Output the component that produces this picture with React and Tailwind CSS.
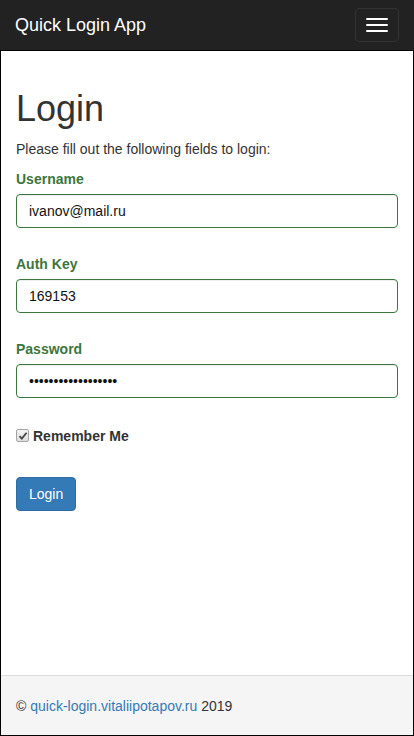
import React from 'react';

const fields = [
  { label: 'Username', type: 'text', value: 'ivanov@mail.ru' },
  { label: 'Auth Key', type: 'text', value: '169153' },
  { label: 'Password', type: 'password', value: 'qwertyuiopasdfghjk' },
];

const App = () => {
  return (
    <div className="min-h-screen flex flex-col bg-white text-[#333] text-[14px] leading-5" style={{ fontFamily: '"Liberation Sans", Arial, sans-serif' }}>
      {/* Navbar */}
      <nav className="h-[50px] bg-[#222] flex items-center justify-between shrink-0">
        <span className="pl-[15px] text-[18px] leading-5 text-white">Quick Login App</span>
        <button className="mr-[15px] w-[44px] h-[34px] border border-[#333] rounded-[4px] flex flex-col items-center justify-center gap-[4px]">
          <span className="block w-[22px] h-[2px] bg-white rounded-[1px]" />
          <span className="block w-[22px] h-[2px] bg-white rounded-[1px]" />
          <span className="block w-[22px] h-[2px] bg-white rounded-[1px]" />
        </button>
      </nav>

      <div className="flex-1 flex flex-col border border-black">
        <main className="flex-1 px-[15px] pt-[18px]">
          <h1 className="mt-[20px] mb-[10px] text-[36px] leading-[1.1] font-normal">Login</h1>
          <p className="mb-[10px]">Please fill out the following fields to login:</p>

          {fields.map((f, i) => (
            <div key={f.label} className={i === 0 ? '' : 'mt-[26px]'}>
              <label className="block mb-[5px] font-bold text-[#3c763d]">{f.label}</label>
              <input
                type={f.type}
                value={f.value}
                readOnly
                className="block w-full h-[34px] px-[12px] py-[6px] border border-[#3c763d] rounded-[4px] text-[14px] text-[#111] bg-white shadow-[inset_0_1px_1px_rgba(0,0,0,0.075)] outline-none"
              />
            </div>
          ))}

          {/* Remember me */}
          <div className="mt-[28px] flex items-center h-5">
            <span className="w-[13px] h-[13px] border border-[#a5a5a5] rounded-[2px] bg-gradient-to-b from-[#f4f4f4] to-[#dedede] flex items-center justify-center">
              <svg width="10" height="10" viewBox="0 0 10 10">
                <path d="M1.5 5.2 L3.8 7.6 L8.6 1.8" fill="none" stroke="#444" strokeWidth="1.8" />
              </svg>
            </span>
            <span className="ml-[4px] font-bold">Remember Me</span>
          </div>

          <button className="mt-[31px] h-[34px] px-[12px] bg-[#337ab7] border border-[#2e6da4] rounded-[4px] text-white text-[14px]">
            Login
          </button>
        </main>

        <footer className="h-[60px] border-t border-[#ddd] bg-[#f5f5f5] px-[15px] pt-[20px]">
          <p>
            © <a className="text-[#337ab7]">quick-login.vitaliipotapov.ru</a> 2019
          </p>
        </footer>
      </div>
    </div>
  );
};

export default App;
